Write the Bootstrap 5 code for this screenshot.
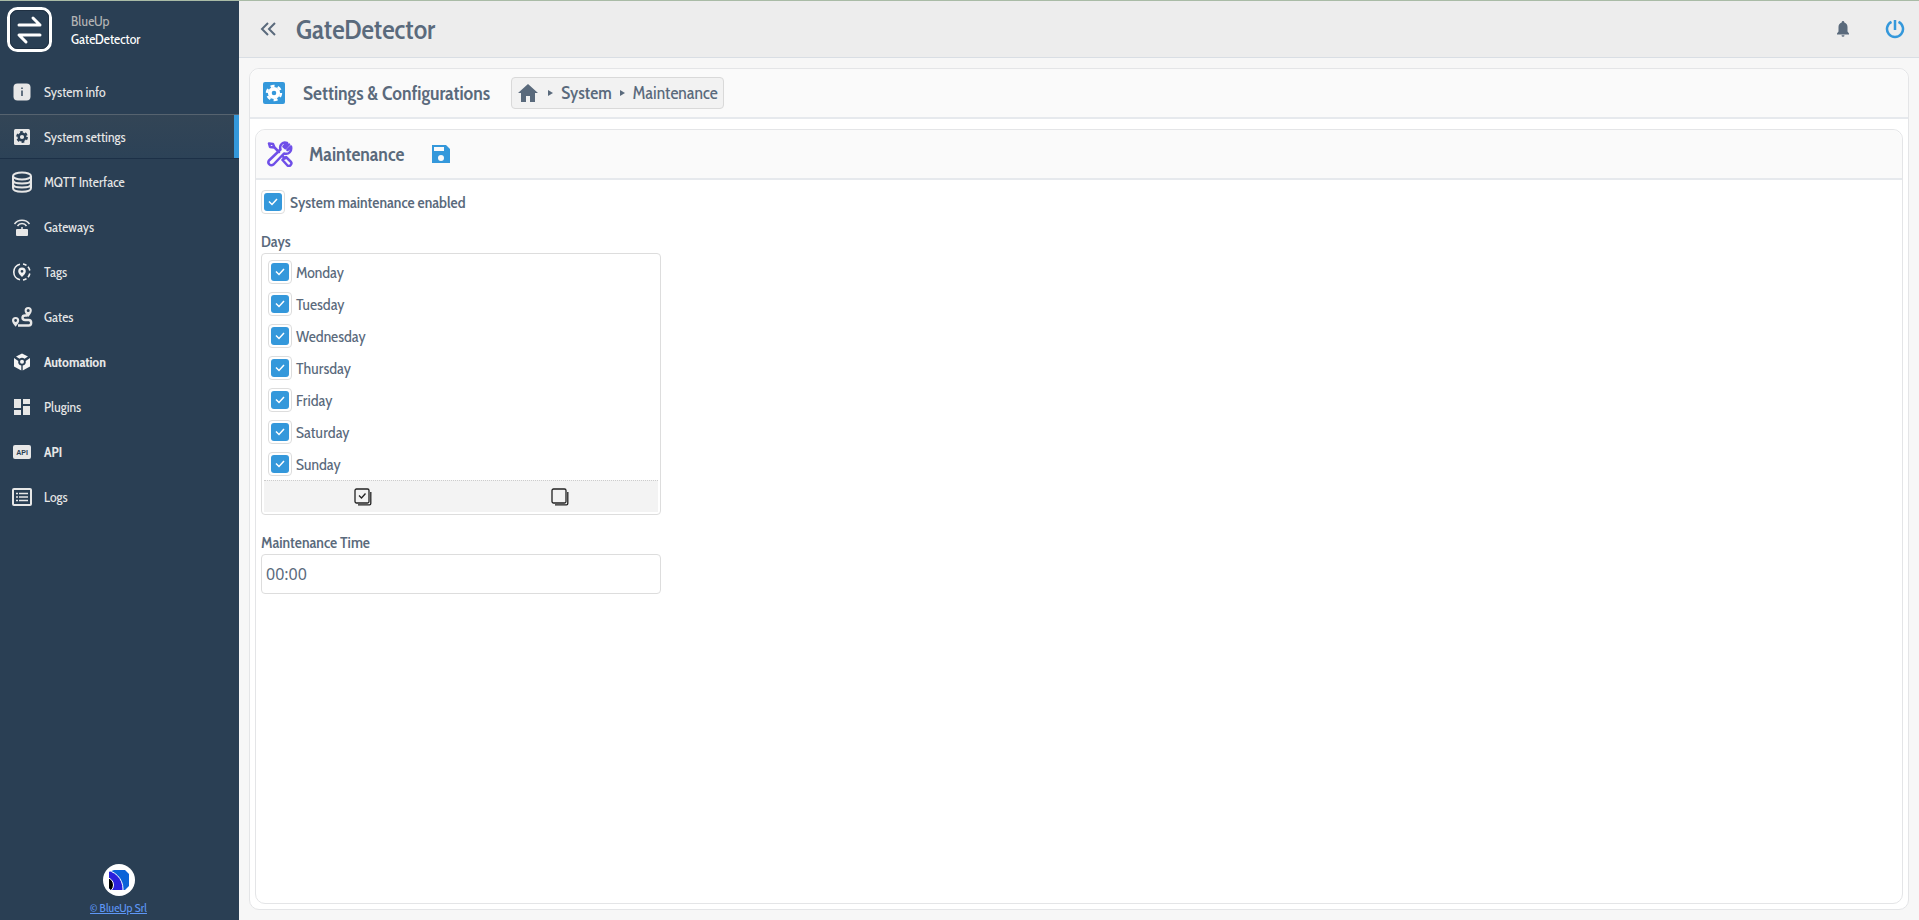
<!DOCTYPE html>
<html lang="en">
<head>
<meta charset="utf-8">
<meta name="viewport" content="width=device-width, initial-scale=1">
<title>GateDetector</title>
<link href="https://cdn.jsdelivr.net/npm/bootstrap@5.3.0/dist/css/bootstrap.min.css" rel="stylesheet">
<script defer src="https://cdn.jsdelivr.net/npm/bootstrap@5.3.0/dist/js/bootstrap.bundle.min.js"></script>
<style>
:root{--ink:#5a6a7c;--accent:#3498db;--line:#ddd}
body{font-family:"Cabin Condensed","Liberation Sans Narrow","Lato",sans-serif;font-size:16px;line-height:24px;color:var(--ink);background:#f7f7f7;border-top:1px solid #a9bba6}
.side-bar{width:239px;background:#2a3f54;color:#fff}
.brand{height:68px;padding:6px 0 0 7px;gap:19px;font-size:14px;line-height:18px}
.brand-name{padding:5px 0 0}
.brand-name span{color:#b4b4b4}
.menu-link{height:45px;padding:0 0 0 11px;gap:11px;color:#e7e7e7;font-size:14px;text-decoration:none;border:solid transparent;border-width:1px 0}
.menu-link.active{background:linear-gradient(#334556,#2c4257);border-top-color:#56636f;border-bottom-color:#1c3047;box-shadow:inset -5px 0 var(--accent)}
.menu-link svg{width:22px;height:22px;flex:none}
.copyright{padding:0 2px 4px 0}
.copyright a{font-size:12px;line-height:16px;color:#5e97f6}
.top-bar{height:57px;background:#ededed;border-bottom:1px solid #d9dee4;padding:0 14px 0 21px}
.top-bar h1{font-size:28px;line-height:32px;margin:0 0 0 20px;font-weight:500}
.top-tools{gap:35px}
.icon-btn{border:0;background:none;padding:0;display:flex;color:var(--ink)}
.panel{background:#fff;border:1px solid #e4e5e7;border-radius:10px}
.main-panel{margin:10px}
.inner-panel{margin:10px 5px 5px}
.panel-head{height:50px;background:#fafafa;border-bottom:2px solid #e6e9ed;border-radius:10px 10px 0 0;padding-left:13px;gap:18px}
.inner-panel .panel-head{padding-left:11px;gap:16px}
.panel-head h2{font-size:20px;line-height:24px;margin:0;font-weight:600}
.panel-head .save{margin-left:12px}
.crumbs{height:32px;margin:0 0 0 3px;padding:0 5px 0 6px;background:#f2f2f2;border:1px solid #d9d9d9;border-radius:4px;font-size:18px}
.crumbs li{display:flex;align-items:center}
.crumbs li+li::before{content:"";border:solid transparent;border-width:3px 0 3px 5px;border-left-color:var(--ink);margin:0 8px}
.crumbs a{color:inherit;text-decoration:none;display:flex}
.crumbs .home{padding-right:2px}
.tick{appearance:none;width:24px;height:24px;margin:0;flex:none;border:1px solid var(--line);border-radius:4px;background:#fff}
.tick:checked{background:#fff url("data:image/svg+xml,%3Csvg xmlns='http://www.w3.org/2000/svg' viewBox='0 0 22 22'%3E%3Crect x='2' y='2' width='18' height='18' rx='3' fill='%233498db'/%3E%3Cpath d='M7 10.500l3 3 5-5.500' fill='none' stroke='white' stroke-width='1.5'/%3E%3C/svg%3E") center/22px 22px no-repeat}
.fields{padding:10px 5px}
.toggle-row{gap:5px}
.field-box{max-width:400px}
.field-label{font-weight:500;line-height:23px}
.day-list{border:1px solid var(--line);border-radius:4px;padding:2px}
.day-row{height:32px;padding:0 4px;gap:4px}
.day-row label{line-height:22px;padding-top:2px}
.day-tools{height:32px;background:#f3f3f3;border-top:1px dotted #ccc}
.time-input{height:40px;border:1px solid var(--line);border-radius:4px;padding:0 4px;font:16px/24px "Noto Sans",sans-serif;color:var(--ink)}
</style>
</head>
<body class="min-vh-100 d-flex">
<nav class="side-bar d-flex flex-column flex-shrink-0">
  <div class="brand d-flex align-items-start">
    <svg width="45" height="45" viewBox="0 0 45 45" fill="none" stroke="#fff" stroke-linecap="round" stroke-linejoin="round"><rect x="1.5" y="1.5" width="42" height="42" rx="9" stroke-width="3"/><rect x="3.500" y="3.500" width="38" height="38" rx="7" stroke="#1f3042" stroke-width="1"/><path d="M12 18h21l-7-7M33 28H12l7 7" stroke-width="3"/></svg>
    <div class="brand-name d-flex flex-column"><span>BlueUp</span><strong class="fw-normal">GateDetector</strong></div>
  </div>
  <a class="menu-link d-flex align-items-center" href="#"><svg viewBox="0 0 22 22"><rect x="2.500" y="2.500" width="17" height="17" rx="4" fill="#e7e7e7"/><path d="M11 9.500v5.500M11 6.500v1.600" stroke="#2a3f54" stroke-width="1.400"/></svg>System info</a>
  <a class="menu-link active d-flex align-items-center" href="#" aria-current="page"><svg viewBox="0 0 22 22"><rect x="3" y="3" width="16" height="16" rx="1.500" fill="#e7e7e7"/><g fill="none" stroke="#2a3f54"><circle cx="11" cy="11" r="3.300" stroke-width="2.400"/><circle cx="11" cy="11" r="5" stroke-width="1.800" stroke-dasharray="2.800 2.436"/></g></svg>System settings</a>
  <a class="menu-link d-flex align-items-center" href="#"><svg viewBox="0 0 22 22" fill="none" stroke="#e7e7e7" stroke-width="2"><ellipse cx="11" cy="5" rx="9" ry="3.500"/><path d="M2 5v12c0 5 18 5 18 0V5M2 9c0 4.700 18 4.700 18 0M2 13c0 4.700 18 4.700 18 0"/></svg>MQTT Interface</a>
  <a class="menu-link d-flex align-items-center" href="#"><svg viewBox="0 0 22 22" fill="none" stroke="#e7e7e7" stroke-width="1.500"><rect x="5" y="13" width="12" height="7" rx="1" fill="#e7e7e7" stroke="none"/><path d="M11 14v-3M3.500 8c3.500-5 11.500-5 15 0M6.500 10c2-3.200 7-3.200 9 0"/></svg>Gateways</a>
  <a class="menu-link d-flex align-items-center" href="#"><svg viewBox="0 0 22 22"><path d="M9 3.200a8 8 0 0 0 0 15.600M12 3a8 8 0 0 1 3.500 1.400M17 5.800a8 8 0 0 1 1.800 3.700M18.800 12.500a8 8 0 0 1-1.800 3.700M15.500 17.600a8 8 0 0 1-3.500 1.400" fill="none" stroke="#f2f2f2" stroke-width="1.600"/><path fill="#f2f2f2" fill-rule="evenodd" d="M11 16c-2-2-3.800-3.600-3.800-5.700a3.800 3.800 0 0 1 7.600 0C14.800 12.400 13 14 11 16zm0-7.100a1.400 1.400 0 1 0 0 2.800 1.400 1.400 0 0 0 0-2.800z"/></svg>Tags</a>
  <a class="menu-link d-flex align-items-center" href="#"><svg viewBox="0 0 22 22"><g fill="#e7e7e7" fill-rule="evenodd"><path d="M17.200 11C15 8.500 13.600 6.700 13.600 4.600a3.600 3.600 0 0 1 7.200 0c0 2.100-1.400 3.900-3.600 6.400zm0-7.900a1.500 1.500 0 1 0 0 3 1.500 1.500 0 0 0 0-3z"/><path d="M4.600 20.800C2.200 18 1 16.400 1 14.600a3.600 3.600 0 0 1 7.200 0c0 1.800-1.200 3.400-3.600 6.200zm0-7.700a1.400 1.400 0 1 0 0 2.800 1.400 1.400 0 0 0 0-2.800z"/></g><path d="M16.500 9.500h-2.300c-3.600 0-3.600 4.500 0 4.500h3.500c3.300 0 3.300 5.500 0 5.500H7" fill="none" stroke="#e7e7e7" stroke-width="2.400"/></svg>Gates</a>
  <a class="menu-link d-flex align-items-center fw-bold" href="#"><svg viewBox="0 0 22 22"><g fill="#f5f5f5"><path d="M5 5.500L11 2.500l6 3-3.500 2.300a4 4 0 0 0-5 0z"/><path d="M3 7l4.300 3a4 4 0 0 0 3 4.600V19.500L3 15.500z"/><path d="M19 7l-4.300 3a4 4 0 0 1-3 4.600V19.500L19 15.500z"/><circle cx="11" cy="10.700" r="2"/></g></svg>Automation</a>
  <a class="menu-link d-flex align-items-center" href="#"><svg viewBox="0 0 22 22" fill="#e7e7e7"><path d="M3 3h7v9H3zM12 3h7v5h-7zM3 14h7v5H3zM12 10h7v9h-7z"/></svg>Plugins</a>
  <a class="menu-link d-flex align-items-center fw-bold" href="#"><svg viewBox="0 0 22 22"><rect x="2" y="4" width="18" height="14" rx="2" fill="#e7e7e7"/><text x="11" y="13.500" font-family="Liberation Sans" font-size="7" font-weight="700" text-anchor="middle" fill="#2a3f54">API</text></svg>API</a>
  <a class="menu-link d-flex align-items-center" href="#"><svg viewBox="0 0 22 22" fill="none" stroke="#e7e7e7"><rect x="2" y="3" width="18" height="16" rx="1" stroke-width="2"/><path d="M8 7.500h9M8 11h9M8 14.500h9M5 7.500h2M5 11h2M5 14.500h2" stroke-width="1.700"/></svg>Logs</a>
  <div class="copyright mt-auto d-flex flex-column align-items-center gap-1">
    <svg width="32" height="32" viewBox="0 0 32 32"><circle cx="16" cy="16" r="16" fill="#fff"/><clipPath id="globe"><path d="M6 8l5-2h11l4 4v12l-4 4H8l-2-2z"/></clipPath><g clip-path="url(#globe)"><rect x="6" y="5" width="21" height="22" fill="#0a63d8"/><circle cx="1" cy="25" r="19" fill="#2a20dc" stroke="#fff" stroke-width="1"/><circle cx="3" cy="21" r="7.500" stroke="#fff"/></g></svg>
    <a href="#">© BlueUp Srl</a>
  </div>
</nav>
<div class="d-flex flex-column flex-grow-1">
  <header class="top-bar d-flex align-items-center">
    <button class="icon-btn" aria-label="Collapse menu"><svg width="16" height="16" viewBox="0 0 16 16" fill="none" stroke="currentColor" stroke-width="2"><path d="M8 2L2 8l6 6M15 2L9 8l6 6"/></svg></button>
    <h1>GateDetector</h1>
    <div class="top-tools d-flex align-items-center ms-auto">
      <button class="icon-btn" aria-label="Notifications"><svg width="14" height="16" viewBox="0 0 14 16" fill="currentColor"><path d="M7 0a1.300 1.300 0 0 1 1.300 1.400C10.500 2 11.500 4 11.500 6v4.500L13 12.500v1H1v-1l1.500-2V6c0-2 1-4 3.200-4.600A1.300 1.300 0 0 1 7 0zM5.500 14.200h3a1.500 1.500 0 0 1-3 0z"/></svg></button>
      <button class="icon-btn" aria-label="Power"><svg width="20" height="20" viewBox="0 0 20 20" fill="none" stroke="#3498db" stroke-width="2.500"><path d="M10 1v10M6.500 2.800a8 8 0 1 0 7 0"/></svg></button>
    </div>
  </header>
  <main class="panel main-panel flex-grow-1 d-flex flex-column">
    <div class="panel-head d-flex align-items-center">
      <svg width="22" height="22" viewBox="0 0 22 22"><rect width="22" height="22" rx="2" fill="#3498db"/><g fill="none" stroke="#fff"><circle cx="11" cy="11" r="4.200" stroke-width="3.800"/><circle cx="11" cy="11" r="7" stroke-width="2.400" stroke-dasharray="4 3.330"/></g></svg>
      <h2>Settings &amp; Configurations</h2>
      <ol class="crumbs list-unstyled d-flex align-items-center">
        <li><a class="home" href="#" aria-label="Home"><svg width="20" height="18" viewBox="0 0 20 18" fill="currentColor"><path d="M10 0l10 9h-3v9h-5v-6H8v6H3V9H0z"/></svg></a></li>
        <li><a class="fw-medium" href="#">System</a></li>
        <li>Maintenance</li>
      </ol>
    </div>
    <section class="panel inner-panel flex-grow-1">
      <div class="panel-head d-flex align-items-center">
        <svg width="26" height="26" viewBox="0 0 26 26" fill="none" stroke="#6f4fe8" stroke-width="2.500" stroke-linejoin="round" stroke-linecap="round"><path d="M2 2.500l4 .5 1.500 3.500L12 11M2 2.500l1 3.500 4 .5M22 3.500l-3.500 3.700-2-1.700L20 2c-4-1.500-8 1.500-6.500 6.500L2 19.500c-2 3 1.500 6 4.500 4L17 12.500c5 1.500 8-2.500 7-7L20.500 9M16 15.500l2 1.800 1-1.300 5 5c1.500 2-1.500 5-3.500 3.500l-5-5.500 1.500-1.500"/></svg>
        <h2>Maintenance</h2>
        <button class="icon-btn save" aria-label="Save"><svg width="18" height="18" viewBox="0 0 18 18"><path fill="#3498db" fill-rule="evenodd" d="M0 0h14l4 4v14H0zm2 2v4h10V2zm7 8a3 3 0 1 0 0 6 3 3 0 0 0 0-6z"/></svg></button>
      </div>
      <form class="fields">
        <div class="toggle-row d-flex align-items-center mb-3"><input class="tick" type="checkbox" id="enabled" checked><label class="field-label" for="enabled">System maintenance enabled</label></div>
        <div class="field-box">
          <div class="field-label" id="days">Days</div>
          <div class="day-list mb-3" role="group" aria-labelledby="days">
            <div class="day-row d-flex align-items-center"><input class="tick" type="checkbox" id="d1" checked><label for="d1">Monday</label></div>
            <div class="day-row d-flex align-items-center"><input class="tick" type="checkbox" id="d2" checked><label for="d2">Tuesday</label></div>
            <div class="day-row d-flex align-items-center"><input class="tick" type="checkbox" id="d3" checked><label for="d3">Wednesday</label></div>
            <div class="day-row d-flex align-items-center"><input class="tick" type="checkbox" id="d4" checked><label for="d4">Thursday</label></div>
            <div class="day-row d-flex align-items-center"><input class="tick" type="checkbox" id="d5" checked><label for="d5">Friday</label></div>
            <div class="day-row d-flex align-items-center"><input class="tick" type="checkbox" id="d6" checked><label for="d6">Saturday</label></div>
            <div class="day-row d-flex align-items-center"><input class="tick" type="checkbox" id="d7" checked><label for="d7">Sunday</label></div>
            <div class="day-tools d-flex align-items-center justify-content-around">
              <button type="button" class="icon-btn" aria-label="Select all"><svg width="18" height="18" viewBox="0 0 18 18" fill="none" stroke="#222" stroke-width="1.300"><rect x="1" y="1" width="14" height="14" rx="1.500"/><path d="M4 16.800h11.500q1.300 0 1.300-1.300V4M5 7.500l2.500 2.500 4-4.500"/></svg></button>
              <button type="button" class="icon-btn" aria-label="Select none"><svg width="18" height="18" viewBox="0 0 18 18" fill="none" stroke="#222" stroke-width="1.300"><rect x="1" y="1" width="14" height="14" rx="1.500"/><path d="M4 16.800h11.500q1.300 0 1.300-1.300V4"/></svg></button>
            </div>
          </div>
          <label class="field-label d-block" for="time">Maintenance Time</label>
          <input class="time-input w-100" id="time" type="text" value="00:00">
        </div>
      </form>
    </section>
  </main>
</div>
</body>
</html>
